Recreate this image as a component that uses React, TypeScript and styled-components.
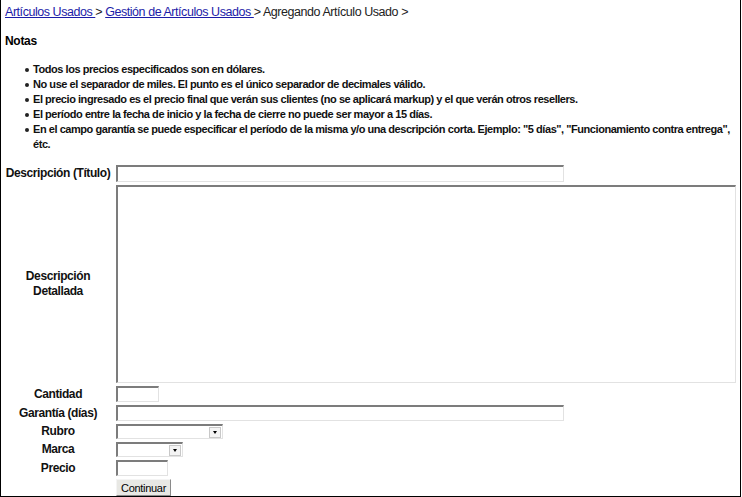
import styled, { createGlobalStyle } from "styled-components";

const GlobalStyle = createGlobalStyle`
  html, body {
    margin: 0;
    padding: 0;
    background: #fff;
  }
  body {
    font-family: "Liberation Sans", Arial, sans-serif;
    color: #000;
  }
`;

const Page = styled.div`
  box-sizing: border-box;
  width: 741px;
  height: 497px;
  border-left: 1px solid #000;
  border-right: 1px solid #000;
  border-bottom: 1px solid #000;
  overflow: hidden;
`;

const Breadcrumb = styled.div`
  padding: 4px 0 0 4px;
  font-size: 12.5px;
  letter-spacing: -0.45px;
  line-height: 16px;
  color: #222;
  white-space: nowrap;
  a {
    color: #1c1ca8;
    text-decoration: underline;
  }
`;

const Title = styled.h4`
  margin: 14px 0 0 4px;
  font-size: 12px;
  line-height: 14px;
  font-weight: bold;
  letter-spacing: -0.3px;
`;

const Notes = styled.ul`
  margin: 14px 0 0 0;
  padding: 0 0 0 32px;
  list-style: none;
  font-size: 11px;
  line-height: 15px;
  font-weight: bold;
  letter-spacing: -0.45px;
  color: #111;
`;

const Note = styled.li`
  position: relative;
  white-space: nowrap;
  &::before {
    content: "";
    position: absolute;
    left: -8px;
    top: 6px;
    width: 4px;
    height: 4px;
    border-radius: 50%;
    background: #222;
  }
`;

const Form = styled.form`
  margin-top: 13px;
  padding-left: 3px;
  display: grid;
  grid-template-columns: 108px auto;
  column-gap: 4px;
  row-gap: 3px;
  align-items: center;
  justify-items: start;
`;

const Label = styled.label`
  justify-self: center;
  text-align: center;
  white-space: nowrap;
  font-size: 12px;
  line-height: 15px;
  font-weight: bold;
  letter-spacing: -0.4px;
  color: #111;
`;

const fieldBorder = `
  box-sizing: border-box;
  border-top: 2px solid #7c7c7c;
  border-left: 2px solid #7c7c7c;
  border-right: 1px solid #e2e2e2;
  border-bottom: 1px solid #e2e2e2;
  background: #fff;
  margin: 0;
  padding: 0 2px;
  font-family: "Liberation Sans", Arial, sans-serif;
  font-size: 12px;
  outline: none;
`;

const TextInput = styled.input<{ $w: number; $h: number }>`
  ${fieldBorder}
  width: ${(p) => p.$w}px;
  height: ${(p) => p.$h}px;
`;

const TextArea = styled.textarea`
  ${fieldBorder}
  width: 620px;
  height: 198px;
  resize: none;
`;

const SelectBox = styled.div<{ $w: number }>`
  ${fieldBorder}
  padding: 0;
  width: ${(p) => p.$w}px;
  height: 15px;
  display: flex;
  align-items: stretch;
  justify-content: flex-end;
`;

const SelectArrow = styled.span`
  box-sizing: border-box;
  width: 12px;
  margin: 1px 1px 0 0;
  border: 1px solid #c8c8c8;
  background: #f4f4f4;
  display: flex;
  align-items: center;
  justify-content: center;
  &::after {
    content: "";
    border-left: 2.5px solid transparent;
    border-right: 2.5px solid transparent;
    border-top: 3px solid #000;
  }
`;

const Button = styled.button`
  box-sizing: border-box;
  width: 55px;
  height: 17px;
  padding: 0;
  margin: 0;
  border-top: 1px solid #f4f4f4;
  border-left: 1px solid #f4f4f4;
  border-right: 1px solid #8a8a8a;
  border-bottom: 1px solid #8a8a8a;
  background: #e8e8e4;
  font-family: "Liberation Sans", Arial, sans-serif;
  font-size: 11px;
  letter-spacing: -0.3px;
  color: #000;
`;

const notes = [
  "Todos los precios especificados son en dólares.",
  "No use el separador de miles. El punto es el único separador de decimales válido.",
  "El precio ingresado es el precio final que verán sus clientes (no se aplicará markup) y el que verán otros resellers.",
  "El período entre la fecha de inicio y la fecha de cierre no puede ser mayor a 15 días.",
];

export default function App() {
  return (
    <>
      <GlobalStyle />
      <Page>
        <Breadcrumb>
          <a href="#">Artículos Usados </a>&gt; <a href="#">Gestión de Artículos Usados </a>&gt; Agregando
          Artículo Usado &gt;
        </Breadcrumb>
        <Title>Notas</Title>
        <Notes>
          {notes.map((n) => (
            <Note key={n}>{n}</Note>
          ))}
          <Note>
            En el campo garantía se puede especificar el período de la misma y/o una descripción corta. Ejemplo:
            "5 días", "Funcionamiento contra entrega",
            <br />
            étc.
          </Note>
        </Notes>
        <Form onSubmit={(e) => e.preventDefault()}>
          <Label>Descripción (Título)</Label>
          <TextInput type="text" $w={448} $h={17} />
          <Label>
            Descripción
            <br />
            Detallada
          </Label>
          <TextArea />
          <Label>Cantidad</Label>
          <TextInput type="text" $w={43} $h={16} />
          <Label>Garantía (días)</Label>
          <TextInput type="text" $w={448} $h={16} />
          <Label>Rubro</Label>
          <SelectBox $w={107}>
            <SelectArrow />
          </SelectBox>
          <Label>Marca</Label>
          <SelectBox $w={67}>
            <SelectArrow />
          </SelectBox>
          <Label>Precio</Label>
          <TextInput type="text" $w={52} $h={16} />
          <span />
          <Button type="submit">Continuar</Button>
        </Form>
      </Page>
    </>
  );
}
